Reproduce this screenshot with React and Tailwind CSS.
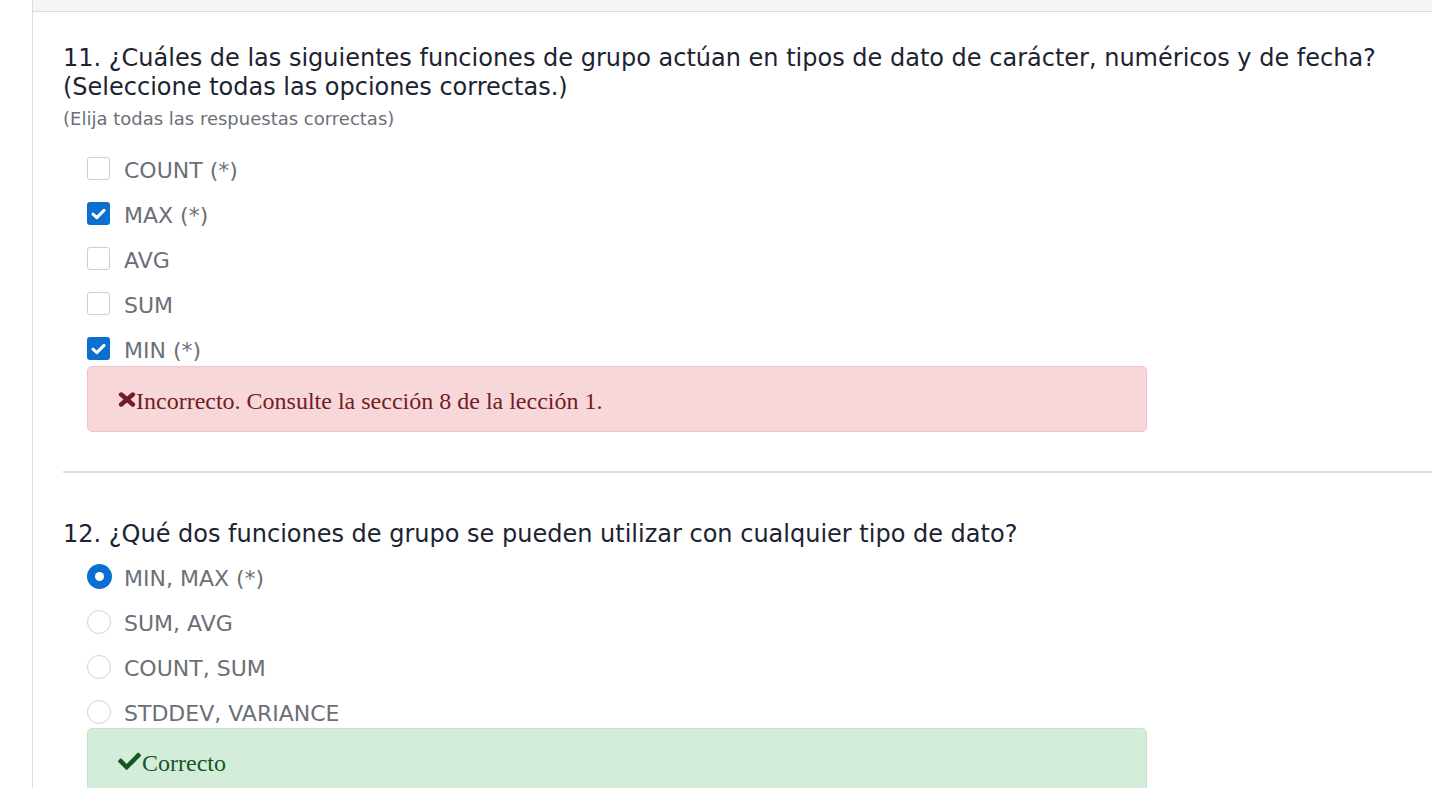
import React from "react";

const q11 = [
  { label: "COUNT (*)", checked: false },
  { label: "MAX (*)", checked: true },
  { label: "AVG", checked: false },
  { label: "SUM", checked: false },
  { label: "MIN (*)", checked: true },
];

const q12 = [
  { label: "MIN, MAX (*)", checked: true },
  { label: "SUM, AVG", checked: false },
  { label: "COUNT, SUM", checked: false },
  { label: "STDDEV, VARIANCE", checked: false },
];

function Checkbox({ checked }) {
  if (checked) {
    return (
      <span className="flex h-[23px] w-[23px] items-center justify-center rounded-[3px] bg-[#0b6fd0]">
        <svg width="15" height="12" viewBox="0 0 15 12">
          <path d="M2 6.2 L5.8 9.6 L13 2.4" fill="none" stroke="#fff" strokeWidth="3" strokeLinecap="round" strokeLinejoin="round" />
        </svg>
      </span>
    );
  }
  return <span className="block h-[23px] w-[23px] rounded-[3px] border border-[#cfcfcf] bg-white" />;
}

function Radio({ checked }) {
  if (checked) {
    return (
      <span className="flex h-[25px] w-[25px] items-center justify-center rounded-full bg-[#0b6fd0]">
        <span className="block h-[9px] w-[9px] rounded-full bg-white" />
      </span>
    );
  }
  return <span className="block h-[24px] w-[24px] rounded-full border border-[#d2d2d2] bg-white" />;
}

function Option({ label, checked, radio }) {
  return (
    <div className="flex h-[45px] items-center">
      <div className="flex w-[37px] justify-start">
        {radio ? <Radio checked={checked} /> : <Checkbox checked={checked} />}
      </div>
      <span className="pt-[4px] text-[22px] leading-[28px] text-[#6b6f76]">{label}</span>
    </div>
  );
}

function CrossIcon() {
  return (
    <svg width="18" height="15" viewBox="0 0 18 15" className="mb-[3px] shrink-0">
      <path d="M3.2 2.6 L14.8 12.4 M14.8 2.6 L3.2 12.4" stroke="#721c24" strokeWidth="4.6" strokeLinecap="round" />
    </svg>
  );
}

function CheckIcon() {
  return (
    <svg width="23" height="18" viewBox="0 0 512 400" className="mr-[1px] mb-[3px] shrink-0">
      <path
        fill="#155724"
        d="M173.9 391.4l-166.4-166.4c-10-10-10-26.2 0-36.2l36.2-36.2c10-10 26.2-10 36.2 0L192 264.7 432.1 24.6c10-10 26.2-10 36.2 0l36.2 36.2c10 10 10 26.2 0 36.2l-294.4 294.4c-10 10-26.2 10-36.2 0z"
      />
    </svg>
  );
}

export default function App() {
  return (
    <div className="flex h-[788px] w-[1432px] overflow-hidden bg-white" style={{ fontFamily: '"DejaVu Sans", Verdana, sans-serif' }}>
      <div className="w-[33px] shrink-0 border-r border-[#dcdcdc] bg-white" />
      <div className="flex-1">
        <div className="h-[12px] border-b border-[#dddddd] bg-[#f5f5f5]" />
        <div className="pl-[30px]">
          <div className="pt-[32px]">
            <h2 className="text-[24px] leading-[29px] text-[#1c2331]">
              11. ¿Cuáles de las siguientes funciones de grupo actúan en tipos de dato de carácter, numéricos y de fecha?
              <br />
              (Seleccione todas las opciones correctas.)
            </h2>
            <p className="mt-[5px] text-[18px] leading-[24px] text-[#6b7079]">(Elija todas las respuestas correctas)</p>
            <div className="mt-[15px] pl-[24px]">
              {q11.map((o) => (
                <Option key={o.label} {...o} />
              ))}
              <div
                className="mt-[-5px] flex h-[66px] w-[1060px] items-center rounded-[5px] border border-[#f3c2c7] bg-[#f8d7da] pl-[30px] pt-[3px] text-[24px] text-[#721c24]"
                style={{ fontFamily: '"Liberation Serif", "Times New Roman", serif' }}
              >
                <CrossIcon />
                Incorrecto. Consulte la sección 8 de la lección 1.
              </div>
            </div>
          </div>
          <div className="mt-[39px] h-[2px] bg-[#dedede]" />
          <div className="pt-[47px]">
            <h2 className="text-[24px] leading-[29px] text-[#1c2331]">12. ¿Qué dos funciones de grupo se pueden utilizar con cualquier tipo de dato?</h2>
            <div className="mt-[5px] pl-[24px]">
              {q12.map((o) => (
                <Option key={o.label} radio {...o} />
              ))}
              <div
                className="mt-[-6px] flex h-[66px] w-[1060px] items-center rounded-[5px] border border-[#c3e6cb] bg-[#d4edda] pl-[30px] pt-[3px] text-[24px] text-[#155724]"
                style={{ fontFamily: '"Liberation Serif", "Times New Roman", serif' }}
              >
                <CheckIcon />
                Correcto
              </div>
            </div>
          </div>
        </div>
      </div>
    </div>
  );
}
